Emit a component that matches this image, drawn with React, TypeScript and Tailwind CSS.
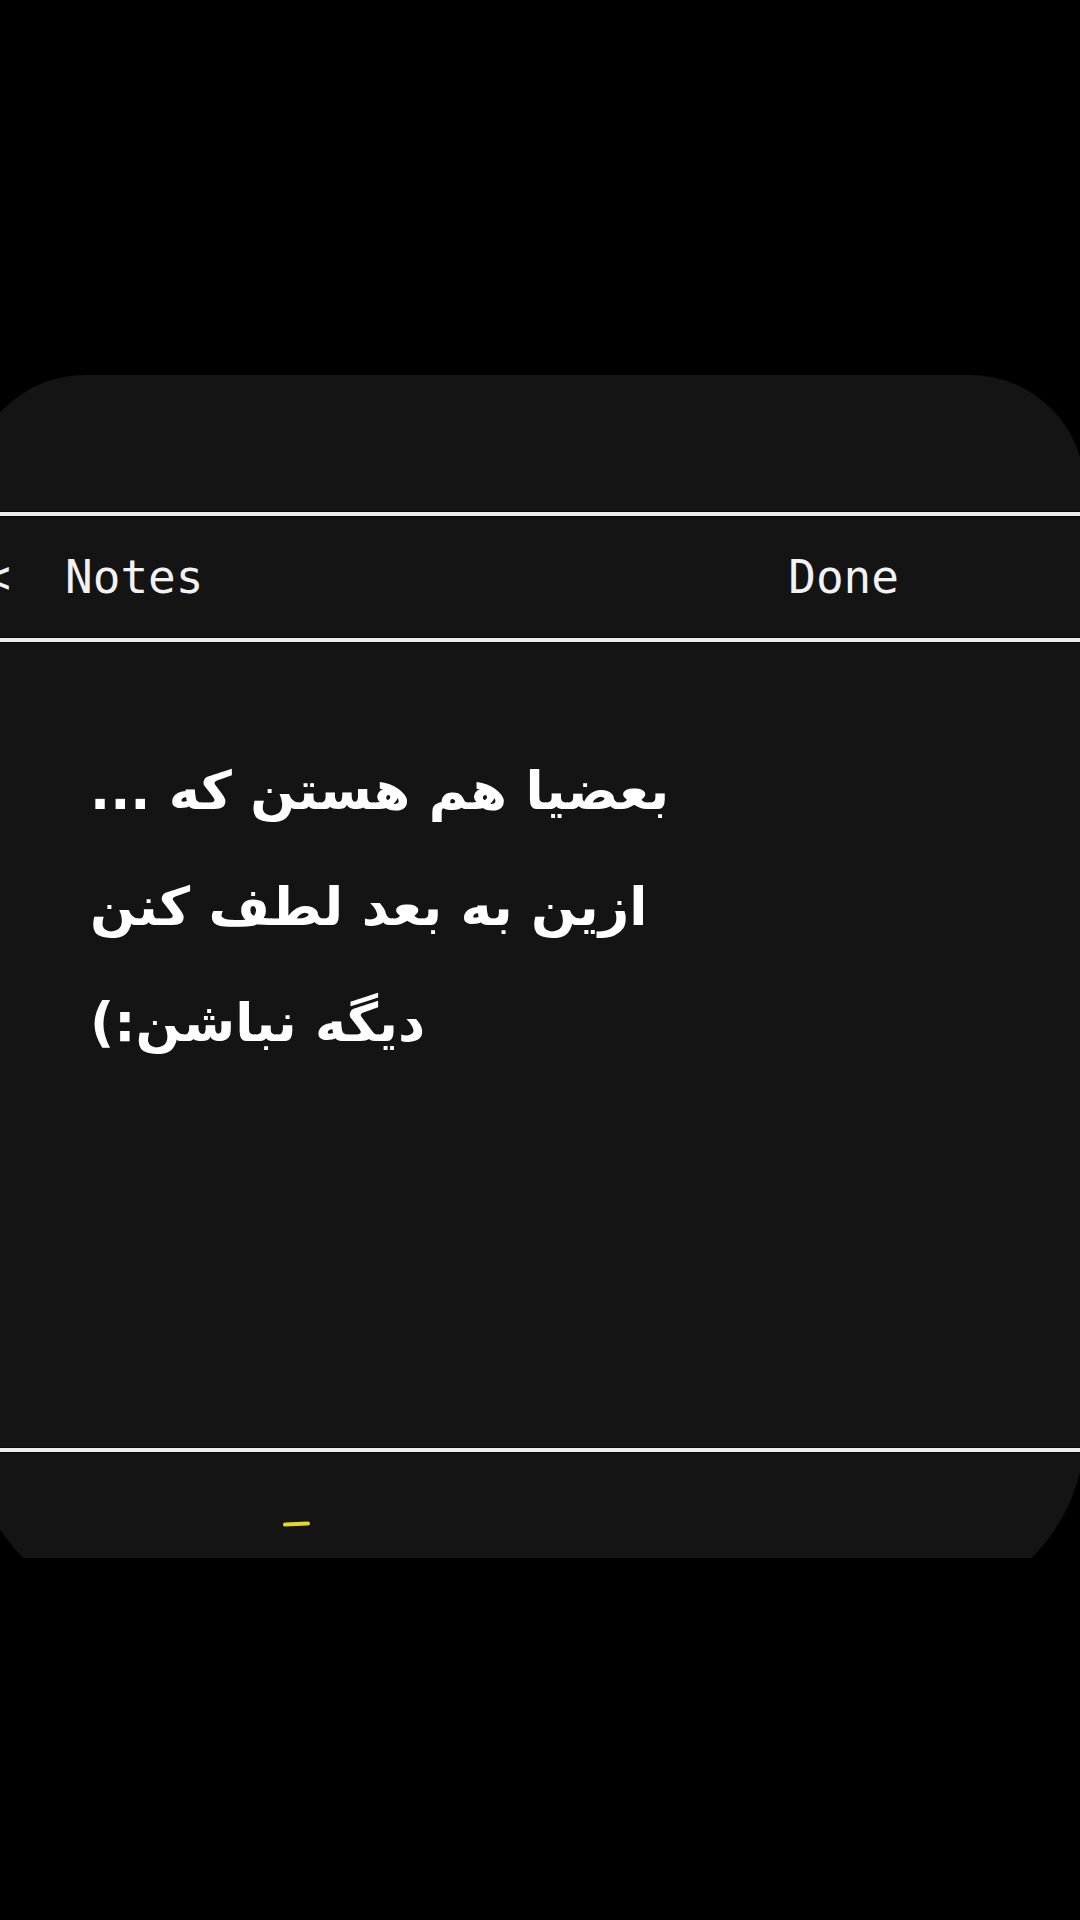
export default function App() {
  return (
    <div className="w-[1080px] h-[1920px] bg-black overflow-hidden">
      <div className="h-[375px]" />
      <div className="h-[1183px] overflow-hidden">
        <div className="-ml-[30px] w-[1115px] h-[1235px] bg-[#141414] rounded-t-[115px] rounded-b-[180px] flex flex-col">
          <div className="h-[136px]" />
          <Line />
          <div className="h-[120px] flex items-center font-['DejaVu_Sans_Mono',monospace] text-[46px] text-[#f2f2f2]">
            <span className="ml-[13px] w-[82px]">&lt;</span>
            <span>Notes</span>
            <span className="ml-auto mr-[186px]">Done</span>
          </div>
          <Line />
          <div className="h-[804px] pt-[90px] pl-[120px] font-['DejaVu_Sans',sans-serif] font-bold text-[53px] leading-[116px] text-white">
            <p dir="rtl" className="w-fit whitespace-nowrap">بعضیا هم هستن که ...</p>
            <p dir="rtl" className="w-fit whitespace-nowrap">ازین به بعد لطف کنن</p>
            <p dir="rtl" className="w-fit whitespace-nowrap">دیگه نباشن:)</p>
          </div>
          <Line />
          <div className="flex-1 pt-[69px] pl-[313px]">
            <div className="w-[27px] h-[4px] rounded-full bg-[#e6d62a] -rotate-3" />
          </div>
        </div>
      </div>
    </div>
  );
}

function Line() {
  return (
    <div className="w-[1110px] h-[6px] bg-[#0a0a0a] py-[1px]">
      <div className="h-[4px] bg-[#ececec]" />
    </div>
  );
}
